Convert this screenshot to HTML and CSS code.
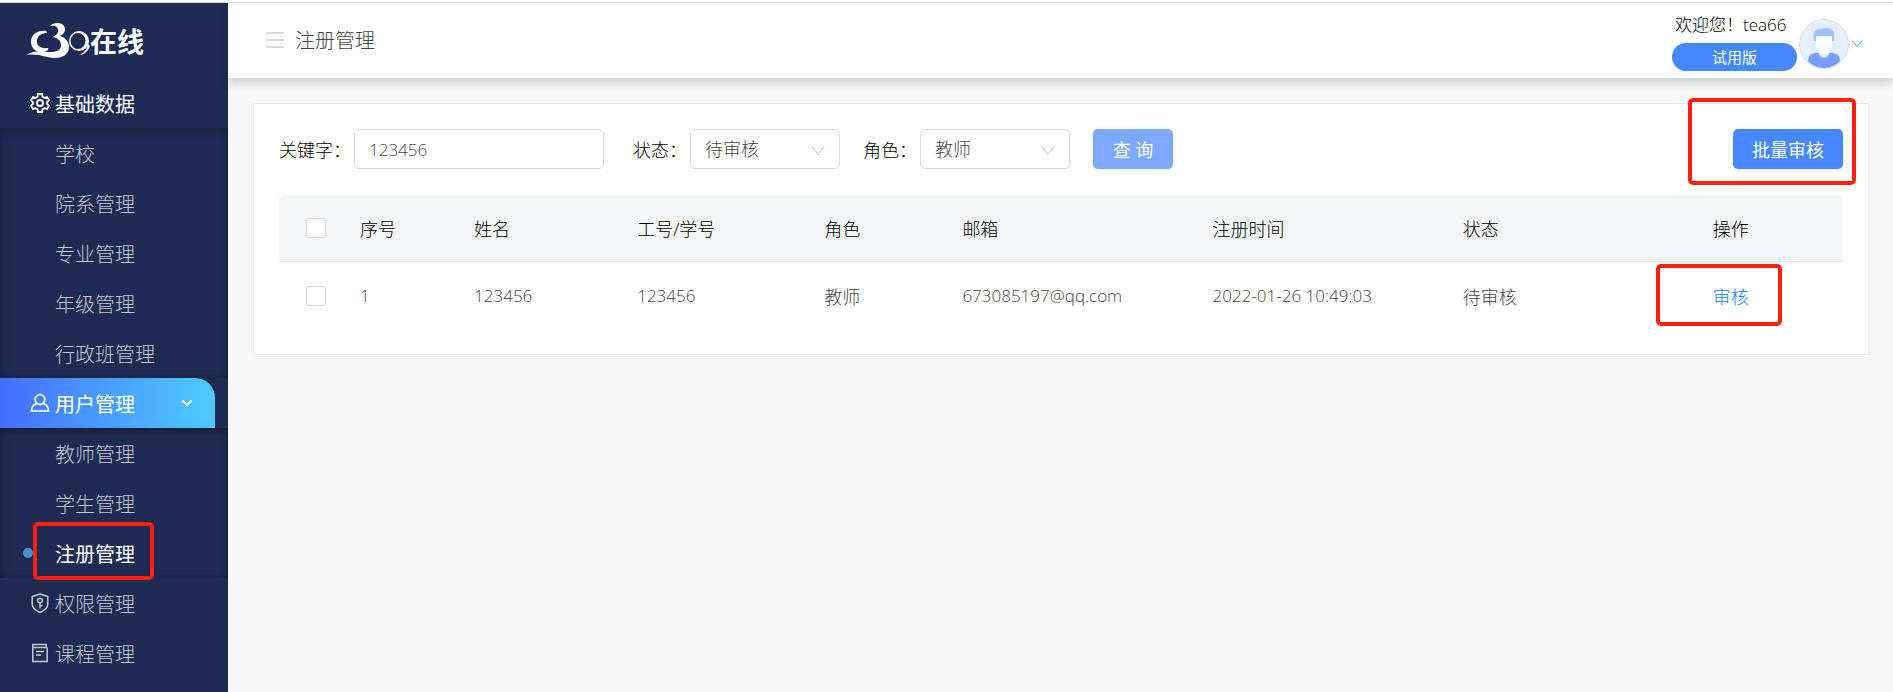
FILE: index.html
```html
<!DOCTYPE html>
<html lang="zh-CN">
<head>
    <meta charset="UTF-8">
    <meta name="viewport" content="width=device-width, initial-scale=1.0">
    <title>注册管理</title>
    <link rel="stylesheet" href="styles.css">
</head>
<body>
    <div class="layout">
        <aside class="sidebar">
            <a href="#" class="logo">
                <svg width="64" height="38" viewBox="0 0 64 38" fill="#fff">
                    <path d="M20 9C12 8 5 12 5 20C5 27 11 31 18 30C22 29 23 27 22 26C14 27 10 23 11 18C12 13 16 11 21 11Z"/>
                    <path d="M24 4C28 -1 39 0 39 7C39 11 36 13 34 14C40 16 43 20 43 25C43 32 37 36 29 36C20 36 12 31 0 33C10 27 18 30 25 30C31 30 35 28 35 23C35 18 31 16 27 15C31 13 33 10 32 7C31 4 28 3 24 4Z"/>
                    <path fill-rule="evenodd" d="M53 9A10 10 0 1 0 53 29A10 10 0 1 0 53 9ZM52 11A7.500 8 0 1 1 52 27A7.500 8 0 1 1 52 11Z"/>
                    <path d="M62 22C61 27 58 31 53 33C57 33 62 30 64 24Z"/>
                </svg>
                <span class="logo-text">在线</span>
            </a>
            <nav>
                <a href="#" class="menu-item current">
                    <svg class="icon" viewBox="0 0 20 20" stroke-width="1.8">
                        <path d="M8 1h4l.5 2.700 2 1.200 2.600-.9 2 3.400-2.100 1.800v1.600l2.100 1.800-2 3.400-2.600-.9-2 1.200L12 19H8l-.5-2.700-2-1.200-2.600.9-2-3.400L3 10.800V9.200L.9 7.400l2-3.400 2.600.9 2-1.200z"/>
                        <circle cx="10" cy="10" r="3"/>
                    </svg>
                    <span>基础数据</span>
                </a>
                <div class="submenu">
                    <a href="#">学校</a>
                    <a href="#">院系管理</a>
                    <a href="#">专业管理</a>
                    <a href="#">年级管理</a>
                    <a href="#">行政班管理</a>
                </div>
                <a href="#" class="menu-item open">
                    <svg class="icon" viewBox="0 0 20 20" stroke-width="1.7">
                        <circle cx="10" cy="6.500" r="4.800"/>
                        <path d="M6.800 10.500C3.500 11.500 1.500 14 1.500 18h17c0-4-2-6.500-5.300-7.500"/>
                    </svg>
                    <span>用户管理</span>
                    <svg class="arrow" viewBox="0 0 12 10"><path d="M1.500 2.500L6 7l4.500-4.500"/></svg>
                </a>
                <div class="submenu">
                    <a href="#">教师管理</a>
                    <a href="#">学生管理</a>
                    <a href="#" class="active"><span class="marked mark-menu">注册管理</span></a>
                </div>
                <a href="#" class="menu-item">
                    <svg class="icon" viewBox="0 0 20 20" stroke-width="1.5">
                        <path d="M10 1l7.800 2.500V11c0 4-3.300 6.500-7.800 8.500C5.500 17.500 2.200 15 2.200 11V3.500z"/>
                        <circle cx="10" cy="7.500" r="2.300"/>
                        <path d="M10 10v5.500M10 12.800h2.500"/>
                    </svg>
                    <span>权限管理</span>
                </a>
                <a href="#" class="menu-item">
                    <svg class="icon" viewBox="0 0 20 20" stroke-width="1.5">
                        <path d="M17.200 4.500V18.500H2.800V1.500h13.400v3M2.800 4.500h14.400M6 8.500h8M6 12h5"/>
                    </svg>
                    <span>课程管理</span>
                </a>
            </nav>
        </aside>

        <div class="main">
            <header class="header">
                <button class="toggle" aria-label="折叠菜单"><i></i><i></i><i></i></button>
                <h1>注册管理</h1>
                <div class="user">
                    <div class="user-info">
                        <span class="welcome">欢迎您！tea66</span>
                        <span class="badge">试用版</span>
                    </div>
                    <svg class="avatar" viewBox="0 0 50 50">
                        <circle cx="25" cy="25" r="24.500" fill="#e6efff" stroke="#ddd"/>
                        <path d="M9 42c0-6 4-8 9-8h14c5 0 9 2 9 8-4 4-9 7-16 7s-12-3-16-7z" fill="#7a9eff"/>
                        <path d="M20 30h10v5c-2 5-8 5-10 0z" fill="#e3f0f5"/>
                        <path d="M15 22c-1-8 0-12 6-12 3-2 15-2 14 6v6z" fill="#9cc3ff"/>
                        <path d="M17 17h16v10c0 5-3 8-8 8s-8-3-8-8z" fill="#f8fcff"/>
                    </svg>
                    <svg class="user-arrow" viewBox="0 0 12 10"><path d="M1 1.500l5 6 5-6"/></svg>
                </div>
            </header>

            <section class="panel">
                <form class="filters">
                    <label for="keyword">关键字：</label>
                    <input type="text" id="keyword" value="123456">
                    <label for="status">状态：</label>
                    <div class="select">
                        <select id="status"><option>待审核</option></select>
                        <svg viewBox="0 0 14 12"><path d="M1 1.500l6 8 6-8"/></svg>
                    </div>
                    <label for="role">角色：</label>
                    <div class="select">
                        <select id="role"><option>教师</option></select>
                        <svg viewBox="0 0 14 12"><path d="M1 1.500l6 8 6-8"/></svg>
                    </div>
                    <button type="button" class="btn btn-search">查 询</button>
                    <div class="marked mark-batch">
                        <button type="button" class="btn btn-batch">批量审核</button>
                    </div>
                </form>

                <table>
                    <colgroup>
                        <col class="col-check">
                        <col class="col-index">
                        <col class="col-name">
                        <col class="col-number">
                        <col class="col-role">
                        <col class="col-wide">
                        <col class="col-wide">
                        <col class="col-wide">
                        <col class="col-action">
                    </colgroup>
                    <thead>
                        <tr>
                            <th><input type="checkbox" aria-label="全选"></th>
                            <th>序号</th>
                            <th>姓名</th>
                            <th>工号/学号</th>
                            <th>角色</th>
                            <th>邮箱</th>
                            <th>注册时间</th>
                            <th>状态</th>
                            <th>操作</th>
                        </tr>
                    </thead>
                    <tbody>
                        <tr>
                            <td><input type="checkbox" aria-label="选择"></td>
                            <td class="num">1</td>
                            <td class="num">123456</td>
                            <td class="num">123456</td>
                            <td>教师</td>
                            <td class="num">673085197@qq.com</td>
                            <td class="num">2022-01-26 10:49:03</td>
                            <td>待审核</td>
                            <td><a href="#" class="marked mark-audit">审核</a></td>
                        </tr>
                    </tbody>
                </table>
            </section>
        </div>
    </div>
</body>
</html>
```
FILE: styles.css
```css
:root {
    --navy: #1e2c54;
    --primary: #4688ff;
    --border: #d9d9d9;
    --text: #444;
    --mark: #ff2010;
}

* {
    margin: 0;
    padding: 0;
    box-sizing: border-box;
}

body {
    font-family: "Open Sans", "Noto Sans CJK SC", sans-serif;
    font-size: 18px;
    font-weight: 300;
    color: #000;
    background: #f7f7f7;
    border-top: 2px solid #fff;
}

a {
    color: inherit;
    text-decoration: none;
}

button,
input,
select {
    font: inherit;
}

.layout {
    display: flex;
    min-height: calc(100vh - 2px);
    border-top: 1px solid #d8d8d8;
}

/* sidebar */
.sidebar {
    width: 228px;
    flex-shrink: 0;
    background: var(--navy);
    color: #c3c7d2;
    font-size: 20px;
}

.logo {
    display: flex;
    align-items: center;
    height: 75px;
    padding-left: 26px;
    color: #fff;
}

.logo-text {
    font-size: 27px;
    font-weight: 700;
}

.menu-item {
    display: flex;
    align-items: center;
    gap: 5px;
    height: 50px;
    padding: 0 22px 0 30px;
}

.menu-item.current {
    color: #fff;
    font-weight: 400;
}

.menu-item.open {
    margin-right: 13px;
    color: #fff;
    font-weight: 400;
    background: linear-gradient(to right, #456eff, #4ecbff);
    border-top-right-radius: 20px;
}

.icon {
    width: 20px;
    height: 20px;
    fill: none;
    stroke: currentColor;
}

.arrow {
    width: 12px;
    height: 10px;
    margin-left: auto;
    fill: none;
    stroke: #fff;
    stroke-width: 2;
}

.submenu {
    box-shadow: inset 0 2px 10px rgba(0, 0, 0, 0.4);
}

.submenu a {
    display: flex;
    align-items: center;
    position: relative;
    height: 50px;
    padding-left: 55px;
}

.submenu .active {
    color: #fff;
    font-weight: 400;
}

.submenu .active::before {
    content: "";
    position: absolute;
    left: 23px;
    width: 10px;
    height: 10px;
    border-radius: 50%;
    background: #4a90d2;
}

/* red highlight frames */
.marked {
    position: relative;
}

.marked::after {
    content: "";
    position: absolute;
    border: 4px solid var(--mark);
    border-radius: 5px;
    pointer-events: none;
}

.mark-menu::after {
    inset: -17px -19px -12px -22px;
}

.mark-batch::after {
    inset: -31px -13px -16px -45px;
}

.mark-audit::after {
    inset: -21px -33px -17px -57px;
}

/* header */
.main {
    flex: 1;
    min-width: 0;
}

.header {
    display: flex;
    align-items: center;
    height: 75px;
    padding: 0 30px 2px 38px;
    background: #fff;
    box-shadow: 0 6px 8px rgba(0, 0, 0, 0.15);
}

.toggle {
    display: flex;
    flex-direction: column;
    gap: 5px;
    width: 18px;
    margin-right: 11px;
    border: none;
    background: none;
}

.toggle i {
    height: 2px;
    background: #d3d7e6;
}

h1 {
    font-size: 20px;
    font-weight: 300;
    color: var(--text);
}

.user {
    display: flex;
    align-items: center;
    gap: 2px;
    margin-left: auto;
    padding-top: 8px;
}

.user-info {
    display: flex;
    flex-direction: column;
    gap: 6px;
    width: 125px;
    padding-bottom: 4px;
}

.welcome {
    padding-left: 3px;
    font-size: 17px;
    line-height: 24px;
    white-space: nowrap;
}

.badge {
    border-radius: 14px;
    background: var(--primary);
    color: #fff;
    font-size: 15px;
    font-weight: 400;
    line-height: 28px;
    text-align: center;
}

.avatar {
    width: 50px;
    height: 50px;
}

.user-arrow {
    width: 12px;
    height: 10px;
    fill: none;
    stroke: #3f9bff;
    stroke-width: 1;
}

/* content */
.panel {
    margin: 25px 24px 0 25px;
    padding: 25px;
    border: 1px solid #e6e8f2;
    background: #fff;
}

.filters {
    display: flex;
    align-items: center;
    height: 40px;
    margin-bottom: 26px;
}

.filters input {
    width: 250px;
    height: 40px;
    margin-right: 29px;
    padding: 0 14px;
    border: 1px solid var(--border);
    border-radius: 5px;
    font-size: 17px;
    color: var(--text);
}

.filters label {
    margin-right: 3px;
    white-space: nowrap;
}

.select {
    position: relative;
    width: 150px;
    margin-right: 23px;
}

.select select {
    width: 100%;
    height: 40px;
    padding: 0 14px;
    appearance: none;
    border: 1px solid var(--border);
    border-radius: 5px;
    background: #fff;
    color: var(--text);
}

.select svg {
    position: absolute;
    top: 16px;
    right: 15px;
    width: 14px;
    height: 12px;
    fill: none;
    stroke: #bfbfbf;
    pointer-events: none;
}

.btn {
    height: 40px;
    border: none;
    border-radius: 5px;
    background: var(--primary);
    color: #fff;
    font-weight: 400;
    box-shadow: 0 2px 2px rgba(0, 0, 0, 0.05);
}

.btn-search {
    width: 80px;
    background: #7da9ff;
}

.btn-batch {
    display: block;
    width: 110px;
}

.mark-batch {
    margin-left: auto;
}

/* table */
table {
    width: 100%;
    table-layout: fixed;
    border-collapse: separate;
    border-spacing: 0;
}

.col-check { width: 61px; }
.col-index { width: 114px; }
.col-name { width: 163px; }
.col-number { width: 187px; }
.col-role { width: 138px; }
.col-wide { width: 250px; }
.col-action { width: 150px; }

th,
td {
    height: 67px;
    padding: 0 20px;
    text-align: left;
    white-space: nowrap;
}

th {
    background: #f4f5f7;
    border-bottom: 1px solid #e6e6e6;
    font-weight: 300;
}

th:first-child {
    border-top-left-radius: 5px;
}

th:last-child {
    border-top-right-radius: 5px;
}

td {
    color: var(--text);
}

.num {
    font-size: 17px;
}

td a {
    color: #1080ff;
}

th:first-child,
td:first-child {
    padding: 0 0 0 27px;
}

input[type="checkbox"] {
    display: block;
    width: 20px;
    height: 20px;
    appearance: none;
    border: 1px solid var(--border);
    border-radius: 2px;
    background: #fff;
}
```
